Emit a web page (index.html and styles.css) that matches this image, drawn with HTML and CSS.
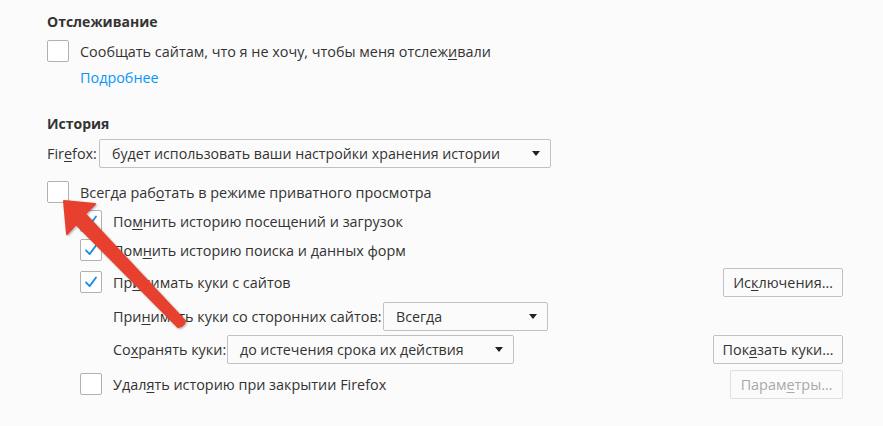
FILE: index.html
```html
<!DOCTYPE html>
<html lang="ru">
<head>
<meta charset="utf-8">
<title>Приватность</title>
<link rel="stylesheet" href="styles.css">
</head>
<body>
<div class="page">
  <section class="group">
    <h2 class="head head-first">Отслеживание</h2>
    <div class="row row-check">
      <span class="box"></span>
      <span class="label">Сообщать сайтам, что я не хочу, чтобы меня отслеж<u>и</u>вали</span>
    </div>
    <a class="link" href="#">Подробнее</a>
  </section>

  <section class="group">
    <h2 class="head head-second">История</h2>
    <div class="row row-select">
      <span class="label lbl-ff">Fir<u>e</u>fox:</span>
      <div class="select select-wide"><span>будет использовать ваши настройки хранения истории</span><i class="caret"></i></div>
    </div>
    <div class="row row-check row-private">
      <span class="box"></span>
      <span class="label">Всегда раб<u>о</u>тать в режиме приватного просмотра</span>
    </div>
    <div class="sub">
      <div class="row row-check row-sub">
        <span class="box checked"><svg viewBox="0 0 22 22"><path d="M5.5 11.5 L9.5 15.5 L16.5 6"/></svg></span>
        <span class="label">По<u>м</u>нить историю посещений и загрузок</span>
      </div>
      <div class="row row-check row-sub">
        <span class="box checked"><svg viewBox="0 0 22 22"><path d="M5.5 11.5 L9.5 15.5 L16.5 6"/></svg></span>
        <span class="label">Пом<u>н</u>ить историю поиска и данных форм</span>
      </div>
      <div class="row row-btn">
        <span class="box checked"><svg viewBox="0 0 22 22"><path d="M5.5 11.5 L9.5 15.5 L16.5 6"/></svg></span>
        <span class="label">Пр<u>и</u>нимать куки с сайтов</span>
        <button class="btn btn-exc">Ис<u>к</u>лючения…</button>
      </div>
      <div class="inner">
        <div class="row row-select row-third">
          <span class="label lbl-third">При<u>н</u>имать куки со сторонних сайтов:</span>
          <div class="select select-third"><span>Всегда</span><i class="caret"></i></div>
        </div>
        <div class="row row-select row-keep">
          <span class="label lbl-keep">Со<u>х</u>ранять куки:</span>
          <div class="select select-keep"><span>до истечения срока их действия</span><i class="caret"></i></div>
          <button class="btn btn-show">Пок<u>а</u>зать куки…</button>
        </div>
      </div>
      <div class="row row-btn row-last">
        <span class="box"></span>
        <span class="label">Удал<u>я</u>ть историю при закрытии Firefox</span>
        <button class="btn btn-params" disabled>Парам<u>е</u>тры…</button>
      </div>
    </div>
  </section>
</div>

<svg class="arrow" width="883" height="426" viewBox="0 0 883 426">
  <path d="M64 201 L95 204 L85 214 L185 321 Q184 326 178 327 L76 224 L67 234 Z"/>
</svg>
</body>
</html>
```

FILE: styles.css
```css
html, body {
  margin: 0;
  padding: 0;
}
body {
  background: #fbfbfb;
  color: #333333;
  font-family: "Open Sans", "Noto Sans", sans-serif;
  font-size: 14.4px;
  width: 883px;
  height: 426px;
  overflow: hidden;
  position: relative;
}
.page {
  padding: 0 40px 0 47px;
}
.head {
  margin: 0;
  font-size: 14px;
  font-weight: 700;
  line-height: 20px;
  color: #333;
}
.head-first { padding-top: 12px; }
.head-second { margin-top: 26px; }

.row {
  display: flex;
  align-items: center;
}
.row-check { height: 22px; margin-top: 8px; }
.row-private { margin-top: 13px; }
.row-select { height: 29px; margin-top: 5px; }
.label { white-space: nowrap; }
.row-check .label, .row-btn .label { margin-left: 11px; }
.lbl-ff { width: 47px; flex: none; }
.lbl-third { width: 265px; flex: none; }
.lbl-keep { width: 109px; flex: none; }

u {
  text-decoration: underline;
  text-underline-offset: 2px;
  text-decoration-thickness: 1px;
}

.box {
  width: 22px;
  height: 22px;
  box-sizing: border-box;
  border: 1px solid #b1b1b1;
  border-radius: 2px;
  background: #ffffff;
  flex: none;
  display: flex;
  align-items: center;
  justify-content: center;
}
.box svg { width: 22px; height: 22px; }
.box svg path {
  fill: none;
  stroke: #1690e6;
  stroke-width: 2;
  stroke-linecap: round;
  stroke-linejoin: round;
}

.link {
  display: block;
  margin: 6px 0 0 33px;
  line-height: 20px;
  color: #0996f8;
  text-decoration: none;
}

.select {
  height: 29px;
  box-sizing: border-box;
  border: 1px solid #c1c1c1;
  border-radius: 2px;
  background: #fbfbfb;
  display: flex;
  align-items: center;
  justify-content: space-between;
  padding: 0 10px 0 12px;
  margin-left: 5px;
  flex: none;
  font-size: 14.2px;
}
.select-wide { width: 452px; }
.select-third { width: 165px; }
.select-keep { width: 287px; }
.caret {
  width: 0;
  height: 0;
  border-left: 4px solid transparent;
  border-right: 4px solid transparent;
  border-top: 5px solid #222;
}

.sub { padding-left: 33px; }
.row-sub { margin-top: 7px; }
.row-btn { height: 30px; margin-top: 6px; }
.row-last { margin-top: 5px; }
.inner { padding-left: 33px; }
.row-third { margin-top: 5px; }
.row-keep { margin-top: 4px; }

.btn {
  margin-left: auto;
  height: 29px;
  box-sizing: border-box;
  border: 1px solid #c1c1c1;
  border-radius: 2px;
  background: #fbfbfb;
  color: #333;
  font-family: inherit;
  font-size: 14.4px;
  padding: 0;
  text-align: center;
}
.btn-exc { width: 120px; }
.btn-show { width: 130px; }
.btn-params {
  width: 113px;
  color: #a9a9a9;
  border-color: #e0e0e0;
}

.arrow {
  position: absolute;
  left: 0;
  top: 0;
  pointer-events: none;
}
.arrow path {
  fill: #e8402f;
  stroke: #e8402f;
  stroke-width: 2;
  stroke-linejoin: round;
  filter: drop-shadow(1px 1px 1px rgba(0,0,0,0.3));
}
```
